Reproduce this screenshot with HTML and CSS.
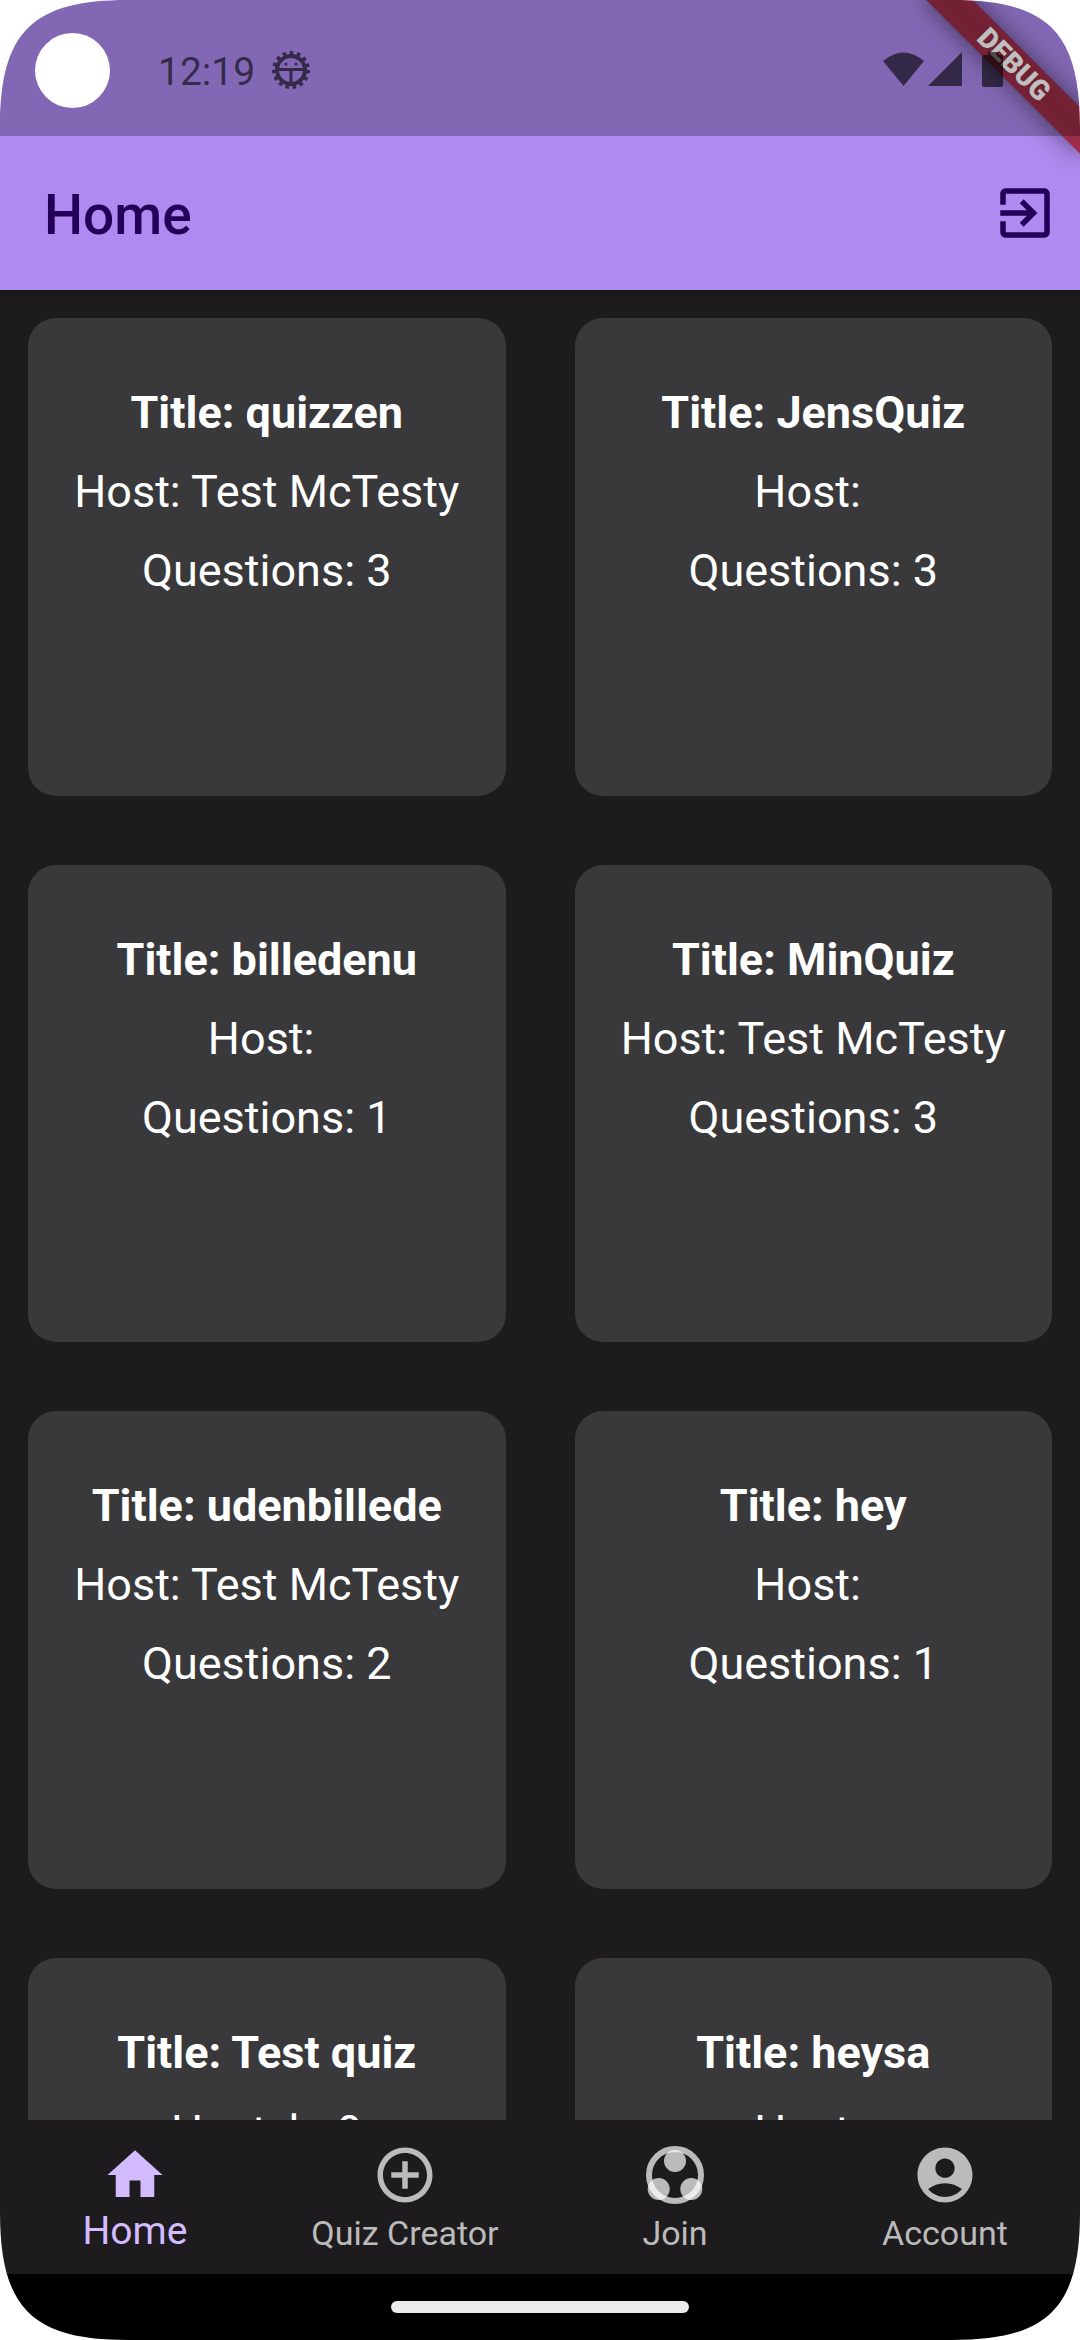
FILE: index.html
```html
<!DOCTYPE html>
<html lang="en">
<head>
<meta charset="utf-8">
<meta name="viewport" content="width=device-width, initial-scale=1">
<title>Home</title>
<link rel="stylesheet" href="styles.css">
</head>
<body>
<div class="screen">
  <header class="top">
    <div class="debug-banner">DEBUG</div>
    <div class="status">
      <span class="camera"></span>
      <span class="clock">12:19</span>
      <svg class="gear" viewBox="0 0 40 40" aria-hidden="true">
        <circle cx="20" cy="20" r="14" fill="none" stroke="#35294a" stroke-width="4"/>
        <circle cx="20" cy="20" r="17" fill="none" stroke="#35294a" stroke-width="4" stroke-dasharray="3.560 3.560"/>
        <path d="M7 18h26v3H21.500v13h-3V21H7z" fill="#35294a"/>
        <circle cx="15" cy="14" r="1.500" fill="#35294a"/>
        <circle cx="25" cy="14" r="1.500" fill="#35294a"/>
      </svg>
      <svg class="signals" viewBox="0 0 122 40" aria-hidden="true">
        <path fill="currentColor" d="M0 11Q20.500-6 41 11L20.500 36zM45 36L79 2v34zM105 2h10v3h3q2 0 2 2v28q0 2-2 2h-17q-2 0-2-2V7q0-2 2-2h4z"/>
      </svg>
    </div>
    <div class="appbar">
      <h1 class="appbar-title">Home</h1>
      <button class="exit" type="button" aria-label="Sign out">
        <svg class="icon" viewBox="0 0 24 24" aria-hidden="true"><path fill="currentColor" d="M10.090 15.590L11.500 17l5-5-5-5-1.410 1.410L12.670 11H3v2h9.670l-2.580 2.590zM19 3H5c-1.110 0-2 .9-2 2v4h2V5h14v14H5v-4H3v4c0 1.100.890 2 2 2h14c1.100 0 2-.9 2-2V5c0-1.100-.9-2-2-2z"/></svg>
      </button>
    </div>
  </header>

  <main class="quizzes">
    <article class="card"><h2 class="card-title">Title: quizzen</h2><p class="line">Host: Test McTesty</p><p class="line">Questions: 3</p></article>
    <article class="card"><h2 class="card-title">Title: JensQuiz</h2><p class="line">Host: </p><p class="line">Questions: 3</p></article>
    <article class="card"><h2 class="card-title">Title: billedenu</h2><p class="line">Host: </p><p class="line">Questions: 1</p></article>
    <article class="card"><h2 class="card-title">Title: MinQuiz</h2><p class="line">Host: Test McTesty</p><p class="line">Questions: 3</p></article>
    <article class="card"><h2 class="card-title">Title: udenbillede</h2><p class="line">Host: Test McTesty</p><p class="line">Questions: 2</p></article>
    <article class="card"><h2 class="card-title">Title: hey</h2><p class="line">Host: </p><p class="line">Questions: 1</p></article>
    <article class="card"><h2 class="card-title">Title: Test quiz</h2><p class="line">Host: he9</p></article>
    <article class="card"><h2 class="card-title">Title: heysa</h2><p class="line">Host: </p></article>
  </main>

  <nav class="tabs">
    <a class="tab tab-active" href="#home" aria-current="page">
      <svg class="icon" viewBox="0 0 24 24" aria-hidden="true"><path fill="currentColor" d="M10 20v-6h4v6h5v-8h3L12 3 2 12h3v8z"/></svg>
      <span class="tab-label">Home</span>
    </a>
    <a class="tab" href="#creator">
      <svg class="icon" viewBox="0 0 24 24" aria-hidden="true"><path fill="currentColor" d="M13 7h-2v4H7v2h4v4h2v-4h4v-2h-4V7zm-1-5C6.480 2 2 6.480 2 12s4.480 10 10 10 10-4.480 10-10S17.520 2 12 2zm0 18c-4.410 0-8-3.590-8-8s3.590-8 8-8 8 3.590 8 8-3.590 8-8 8z"/></svg>
      <span class="tab-label">Quiz Creator</span>
    </a>
    <a class="tab" href="#join">
      <svg class="icon" viewBox="0 0 66 66" aria-hidden="true">
        <circle cx="33" cy="33" r="26" fill="none" stroke="#fff" stroke-opacity=".7" stroke-width="6"/>
        <g fill="#fff" fill-opacity=".7"><circle cx="33" cy="19" r="11"/><circle cx="16.700" cy="47" r="11"/><circle cx="49.300" cy="47" r="11"/></g>
      </svg>
      <span class="tab-label">Join</span>
    </a>
    <a class="tab" href="#account">
      <svg class="icon" viewBox="0 0 24 24" aria-hidden="true"><path fill="currentColor" d="M12 2C6.480 2 2 6.480 2 12s4.480 10 10 10 10-4.480 10-10S17.520 2 12 2zm0 4c1.930 0 3.500 1.570 3.500 3.500S13.930 13 12 13s-3.500-1.570-3.500-3.500S10.070 6 12 6zm0 14c-2.030 0-4.430-.820-6.140-2.880C7.550 15.800 9.680 15 12 15s4.450.8 6.140 2.120C16.430 19.180 14.030 20 12 20z"/></svg>
      <span class="tab-label">Account</span>
    </a>
  </nav>
  <footer class="gesture"><span class="handle"></span></footer>

  <svg class="corner corner-tl" viewBox="0 0 128 128" aria-hidden="true"><path d="M0 0V128C0 32 32 0 128 0z"/></svg>
  <svg class="corner corner-tr" viewBox="0 0 128 128" aria-hidden="true"><path d="M128 0V128C128 32 96 0 0 0z"/></svg>
  <svg class="corner corner-bl" viewBox="0 0 128 128" aria-hidden="true"><path d="M0 128V0C0 96 32 128 128 128z"/></svg>
  <svg class="corner corner-br" viewBox="0 0 128 128" aria-hidden="true"><path d="M128 128V0C128 96 96 128 0 128z"/></svg>
</div>
</body>
</html>
```

FILE: styles.css
```css
* { box-sizing: border-box; }

body {
  margin: 0;
  background: #ffffff;
  font-family: Roboto, "Liberation Sans", sans-serif;
}

.screen {
  position: relative;
  display: flex;
  flex-direction: column;
  height: 100vh;
  overflow: hidden;
  background: #1e1b1e;
}

.top {
  position: relative;
  z-index: 1;
  flex: none;
  overflow: hidden;
  background: #ae8bf0;
  box-shadow: 0 4px 12px rgba(0, 0, 0, 0.3);
}

.debug-banner {
  position: absolute;
  top: 48px;
  right: -44px;
  width: 220px;
  height: 33px;
  background: linear-gradient(rgba(156, 30, 46, 0.86), rgba(146, 28, 40, 0.86), rgba(156, 30, 46, 0.86));
  box-shadow: 0 0 24px rgba(0, 0, 0, 0.5);
  color: #ffffff;
  font-size: 28px;
  font-weight: 900;
  line-height: 33px;
  text-align: center;
  transform: rotate(45deg);
}

.status {
  position: relative;
  display: flex;
  align-items: center;
  height: 136px;
  padding: 4px 75px 0 35px;
  background: rgba(0, 0, 0, 0.25);
  color: rgba(0, 0, 0, 0.6);
}

.camera {
  width: 75px;
  height: 75px;
  border-radius: 50%;
  background: #ffffff;
}

.clock {
  margin-left: 48px;
  padding-top: 3px;
  font-size: 39px;
  line-height: 46px;
}

.gear {
  width: 40px;
  height: 40px;
  margin-left: 16px;
}

.signals {
  width: 122px;
  height: 40px;
  margin-left: auto;
}

.appbar {
  display: flex;
  align-items: center;
  justify-content: space-between;
  height: 154px;
  padding: 0 22px 0 44px;
  color: #240058;
}

.appbar-title {
  margin: 0;
  padding-top: 3px;
  font-size: 55px;
  font-weight: 500;
  line-height: 64px;
}

.exit {
  padding: 0;
  border: 0;
  background: none;
  color: inherit;
}

.icon {
  display: block;
  width: 66px;
  height: 66px;
}

.quizzes {
  display: grid;
  flex: 1;
  grid-template-columns: 1fr 1fr;
  align-content: start;
  gap: 69px;
  min-height: 0;
  padding: 28px;
  overflow: hidden;
}

.card {
  display: flex;
  flex-direction: column;
  gap: 13px;
  aspect-ratio: 1;
  padding-top: 62px;
  border-radius: 28px;
  background: #39383a;
  color: #ffffff;
  font-size: 45px;
  line-height: 66px;
  text-align: center;
  white-space: pre;
}

.card-title,
.line {
  margin: 0;
  font-size: inherit;
}

.tabs {
  display: grid;
  flex: none;
  grid-template-columns: repeat(4, 1fr);
  height: 154px;
  background: #1e1b1e;
}

.tab {
  display: flex;
  flex-direction: column;
  align-items: center;
  padding-top: 22px;
  color: #bbbbbb;
  font-size: 34px;
  line-height: 50px;
  text-decoration: none;
}

.tab-active {
  color: #d3bbff;
  font-size: 39px;
  line-height: 46px;
}

.gesture {
  display: flex;
  flex: none;
  align-items: center;
  justify-content: center;
  height: 66px;
  background: #000000;
}

.handle {
  width: 298px;
  height: 12px;
  border-radius: 6px;
  background: #ebebeb;
}

/* Rounded display corners, drawn over the content */
.corner {
  position: absolute;
  z-index: 2;
  width: 128px;
  height: 128px;
  fill: #ffffff;
}

.corner-tl { top: 0; left: 0; }
.corner-tr { top: 0; right: 0; }
.corner-bl { bottom: 0; left: 0; }
.corner-br { bottom: 0; right: 0; }
```
